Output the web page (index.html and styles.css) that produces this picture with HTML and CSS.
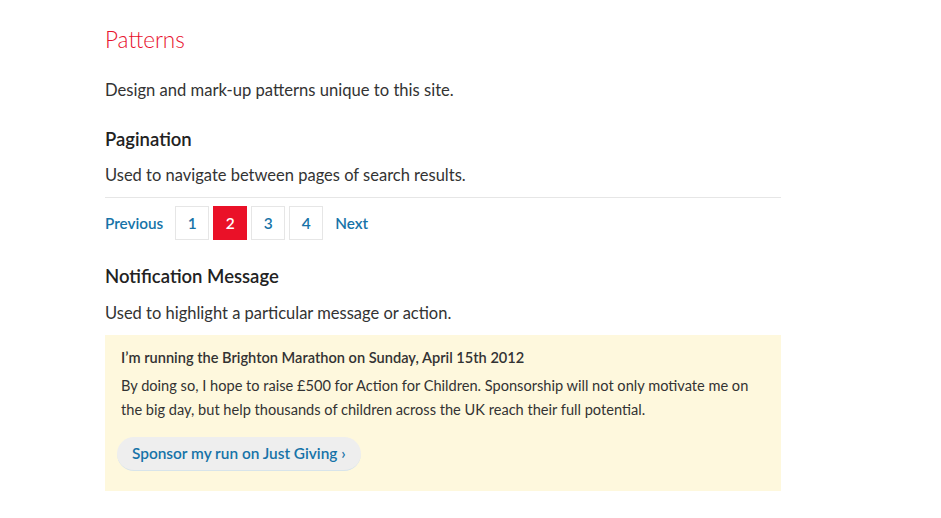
FILE: index.html
```html
<!DOCTYPE html>
<html lang="en">
<head>
<meta charset="utf-8">
<title>Patterns</title>
<link rel="stylesheet" href="styles.css">
</head>
<body>
<main class="page">
  <h1 class="title">Patterns</h1>
  <p class="lead">Design and mark-up patterns unique to this site.</p>

  <h2 class="section-title">Pagination</h2>
  <p class="text">Used to navigate between pages of search results.</p>
  <nav class="pagination">
    <a class="page-link" href="#">Previous</a>
    <a class="page-box" href="#">1</a>
    <span class="page-box current">2</span>
    <a class="page-box" href="#">3</a>
    <a class="page-box" href="#">4</a>
    <a class="page-link" href="#">Next</a>
  </nav>

  <h2 class="section-title">Notification Message</h2>
  <p class="text">Used to highlight a particular message or action.</p>
  <div class="notice">
    <h3 class="notice-title">I’m running the Brighton Marathon on Sunday, April 15th 2012</h3>
    <p class="notice-text">By doing so, I hope to raise £500 for Action for Children. Sponsorship will not only motivate me on the big day, but help thousands of children across the UK reach their full potential.</p>
    <a class="pill" href="#">Sponsor my run on Just Giving ›</a>
  </div>
</main>
</body>
</html>
```
FILE: styles.css
```css
* { box-sizing: border-box; }
body {
  margin: 0;
  background: #fff;
  font-family: "Lato", "Open Sans", sans-serif;
  color: #333;
}
.page {
  width: 676px;
  margin-left: 105px;
  padding-top: 26px;
}
.title {
  margin: 0;
  font-size: 22.5px;
  font-weight: 300;
  color: #e8112d;
  line-height: 28px;
}
.lead {
  margin: 24px 0 0;
  font-size: 16.6px;
  line-height: 24px;
}
.section-title {
  margin: 25px 0 0;
  font-size: 18.5px;
  font-weight: 600;
  line-height: 24px;
  color: #222;
}
.text {
  margin: 12px 0 0;
  font-size: 16.5px;
  line-height: 24px;
}
.pagination {
  margin-top: 10px;
  border-top: 1px solid #e6e6e6;
  padding-top: 8px;
  display: flex;
  align-items: center;
  gap: 4px;
}
.page-link {
  color: #1673a8;
  text-decoration: none;
  font-weight: 600;
  font-size: 15.3px;
}
.page-link:first-child { margin-right: 8px; }
.page-link:last-child { margin-left: 8px; }
.page-box {
  width: 34px;
  height: 34px;
  border: 1px solid #e6e6e6;
  display: flex;
  align-items: center;
  justify-content: center;
  color: #1673a8;
  text-decoration: none;
  font-size: 15.5px;
  font-weight: 600;
}
.page-box.current {
  background: #ea1128;
  border-color: #ea1128;
  color: #fff;
}
.pagination + .section-title { margin-top: 24px; }
.pagination + .section-title + .text { margin-top: 13px; }
.notice {
  margin-top: 10px;
  background: #fef8dd;
  padding: 12px 16px 20px 16px;
}
.notice-title {
  margin: 0;
  font-size: 14.6px;
  font-weight: 600;
  line-height: 22px;
  color: #333;
}
.notice-text {
  margin: 5px 0 0;
  font-size: 14.6px;
  line-height: 24px;
}
.pill {
  display: inline-block;
  margin-top: 15px;
  margin-left: -4px;
  padding: 5px 15px;
  border-radius: 17px;
  background: #eeeeee;
  border-bottom: 1px solid #d8e4ea;
  color: #1673a8;
  font-size: 15.4px;
  font-weight: 600;
  line-height: 23px;
  text-decoration: none;
}
```
